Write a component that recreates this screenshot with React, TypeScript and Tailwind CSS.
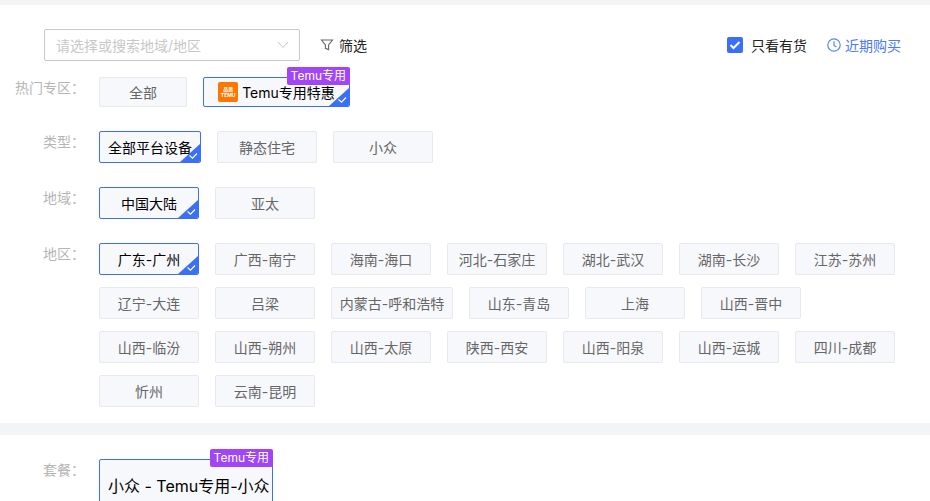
import React from "react";

const fontCls = "font-['Inter','Noto_Sans_CJK_SC',sans-serif]";

function Corner() {
  return (
    <svg className="absolute right-0 bottom-0" width="20" height="18" viewBox="0 0 20 18">
      <path d="M20 0V16.5a1.5 1.5 0 0 1-1.5 1.5H0Z" fill="#3a6ff7" />
      <path d="M9.5 11.5l3 2.6 4.5-4.6" fill="none" stroke="#fff" strokeWidth="1.2" />
    </svg>
  );
}

function Badge() {
  return (
    <span className="absolute right-[-1px] top-[-11px] h-[18px] px-[4px] rounded-[2px] bg-[#a145f7] text-white text-[12px] leading-[18px] whitespace-nowrap">
      Temu专用
    </span>
  );
}

function Chip({
  label,
  w,
  h = 32,
  active,
}: {
  label: string;
  w: string;
  h?: number;
  active?: boolean;
}) {
  return (
    <div
      className={`relative flex items-center justify-center ${w} ${h === 30 ? "h-[30px]" : "h-[32px]"} rounded-[2px] border bg-[#f7f8fc] text-[14px] whitespace-nowrap ${
        active ? "border-[#3a6ff7] text-black" : "border-[#e8e9ed] text-[#666]"
      }`}
    >
      {label}
      {active && <Corner />}
    </div>
  );
}

function Row({ label, children, mt }: { label: string; children: React.ReactNode; mt: string }) {
  return (
    <div className={`flex ${mt}`}>
      <div className="w-[99px] shrink-0 pr-[14px] text-right text-[14px] leading-[22px] text-[#b5b5b5] whitespace-nowrap">
        {label}
      </div>
      <div className="flex flex-wrap gap-x-[16px] gap-y-[12px] w-[810px]">{children}</div>
    </div>
  );
}

const areas: [string, string][] = [
  ["广西-南宁", "w-[100px]"],
  ["海南-海口", "w-[100px]"],
  ["河北-石家庄", "w-[100px]"],
  ["湖北-武汉", "w-[100px]"],
  ["湖南-长沙", "w-[100px]"],
  ["江苏-苏州", "w-[100px]"],
  ["辽宁-大连", "w-[100px]"],
  ["吕梁", "w-[100px]"],
  ["内蒙古-呼和浩特", "w-[122px]"],
  ["山东-青岛", "w-[100px]"],
  ["上海", "w-[100px]"],
  ["山西-晋中", "w-[100px]"],
  ["山西-临汾", "w-[100px]"],
  ["山西-朔州", "w-[100px]"],
  ["山西-太原", "w-[100px]"],
  ["陕西-西安", "w-[100px]"],
  ["山西-阳泉", "w-[100px]"],
  ["山西-运城", "w-[100px]"],
  ["四川-成都", "w-[100px]"],
  ["忻州", "w-[100px]"],
  ["云南-昆明", "w-[100px]"],
];

export default function App() {
  return (
    <div className={`h-[501px] w-[930px] overflow-hidden bg-[#f3f4f6] pt-[5px] ${fontCls}`}>
      <div className="bg-white h-[418px] pt-[24px]">
        <div className="flex items-center h-[32px] pl-[44px] pr-[29px]">
          <div className="flex items-center justify-between w-[256px] h-[32px] border border-[#c9c9c9] rounded-[2px] pl-[11px] pr-[10px] text-[14px] text-[#c8c8c8]">
            <span>请选择或搜索地域/地区</span>
            <svg width="12" height="8" viewBox="0 0 12 8" fill="none" stroke="#c4c4c4" strokeWidth="1">
              <path d="M1 1l5 5.5L11 1" />
            </svg>
          </div>
          <svg className="ml-[20px]" width="14" height="14" viewBox="0 0 14 14" fill="none" stroke="#666" strokeWidth="1.1">
            <path d="M1.5 2h11L8.6 7v4.6l-3.2-1.3V7Z" />
          </svg>
          <span className="ml-[5px] text-[14px] text-[#222]">筛选</span>
          <div className="ml-auto flex items-center">
            <div className="flex items-center justify-center w-[16px] h-[16px] rounded-[2px] bg-[#3a6ff7]">
              <svg width="12" height="10" viewBox="0 0 12 10" fill="none" stroke="#fff" strokeWidth="2">
                <path d="M1.5 5l3 3 6-6" />
              </svg>
            </div>
            <span className="ml-[8px] text-[14px] text-[#222]">只看有货</span>
            <svg className="ml-[20px]" width="14" height="14" viewBox="0 0 14 14" fill="none" stroke="#5b86f2" strokeWidth="1.2">
              <circle cx="7" cy="7" r="6.2" />
              <path d="M7 3.2V7.4l2.4 1.6" />
            </svg>
            <span className="ml-[4px] text-[14px] text-[#4b7bf5]">近期购买</span>
          </div>
        </div>

        <Row label="热门专区：" mt="mt-[16px]">
          <Chip label="全部" w="w-[88px]" h={30} />
          <div className="relative flex items-center justify-center w-[147px] h-[30px] rounded-[2px] border border-[#3a6ff7] bg-[#f7f8fc] text-[14px] text-black whitespace-nowrap">
            <span className="flex flex-col items-center justify-center w-[20px] h-[20px] mr-[4px] rounded-[2px] bg-[#fb7701] text-white font-bold text-[5px] leading-[6px]">
              <span>品质</span>
              <span>TEMU</span>
            </span>
            Temu专用特惠
            <Badge />
            <Corner />
          </div>
        </Row>

        <Row label="类型：" mt="mt-[24px]">
          <Chip label="全部平台设备" w="w-[102px]" active />
          <Chip label="静态住宅" w="w-[100px]" />
          <Chip label="小众" w="w-[100px]" />
        </Row>

        <Row label="地域：" mt="mt-[24px]">
          <Chip label="中国大陆" w="w-[100px]" active />
          <Chip label="亚太" w="w-[100px]" />
        </Row>

        <Row label="地区：" mt="mt-[24px]">
          <Chip label="广东-广州" w="w-[100px]" active />
          {areas.map(([name, w]) => (
            <Chip key={name} label={name} w={w} />
          ))}
        </Row>
      </div>

      <div className="bg-white h-[66px] mt-[12px] pt-[24px]">
        <div className="flex">
          <div className="w-[99px] shrink-0 pr-[14px] text-right text-[14px] leading-[22px] text-[#b5b5b5]">套餐：</div>
          <div className="relative w-[174px] h-[60px] rounded-[2px] border border-[#3a6ff7] bg-[#f7f8fc] text-[16px] leading-[52px] pl-[8px] text-black whitespace-nowrap">
            小众 - Temu专用-小众
            <Badge />
          </div>
        </div>
      </div>
    </div>
  );
}
